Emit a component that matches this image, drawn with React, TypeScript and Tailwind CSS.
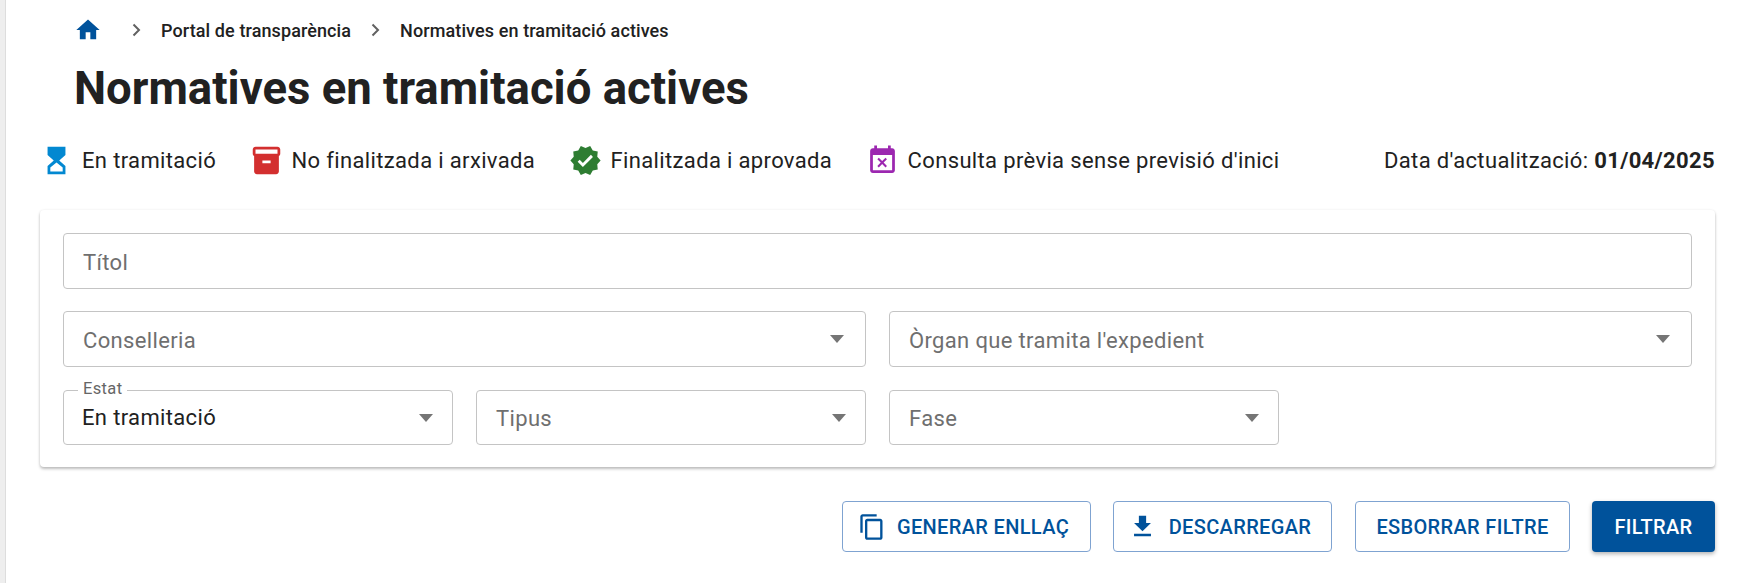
const ICONS = {
  home: "M10 20v-6h4v6h5v-8h3L12 3 2 12h3v8z",
  hourglass: "M5.5 2H18.5V8L14 12L18.5 16V22H5.5V16L10 12L5.5 8ZM16.5 20V17L12 13.5L7.5 17V20Z",
  archive: "M20 2H4c-1 0-2 .9-2 2v3.01c0 .72.43 1.34 1 1.69V20c0 1.1 1.1 2 2 2h14c.9 0 2-.9 2-2V8.7c.57-.35 1-.97 1-1.69V4c0-1.1-1-2-2-2zm-5 12H9v-2h6v2zm5-7H4V4h16v3z",
  verified: "M23 12l-2.44-2.79.34-3.69-3.61-.82-1.89-3.2L12 2.96 8.6 1.5 6.71 4.69 3.1 5.5l.34 3.7L1 12l2.44 2.79-.34 3.7 3.61.82L8.6 22.5l3.4-1.47 3.4 1.46 1.89-3.19 3.61-.82-.34-3.69L23 12zm-12.91 4.72l-3.8-3.81 1.48-1.48 2.32 2.33 5.85-5.87 1.48 1.48-7.33 7.35z",
  event: "M9.31 17l2.44-2.44L14.19 17l1.06-1.06-2.44-2.44 2.44-2.44L14.19 10l-2.44 2.44L9.31 10l-1.06 1.06 2.44 2.44-2.44 2.44L9.31 17zM19 3h-1V1h-2v2H8V1H6v2H5c-1.11 0-1.99.9-1.99 2L3 19c0 1.1.89 2 2 2h14c1.1 0 2-.9 2-2V5c0-1.1-.9-2-2-2zm0 16H5V8h14v11z",
  copy: "M16 1H4c-1.1 0-2 .9-2 2v14h2V3h12V1zm3 4H8c-1.1 0-2 .9-2 2v14c0 1.1.9 2 2 2h11c1.1 0 2-.9 2-2V7c0-1.1-.9-2-2-2zm0 16H8V7h11v14z",
  download: "M19 9h-4V3H9v6H5l7 7 7-7zM5 18v2h14v-2H5z",
};

const LEGEND = [
  { label: "En tramitació", icon: ICONS.hourglass, color: "text-[#0288d1]" },
  { label: "No finalitzada i arxivada", icon: ICONS.archive, color: "text-[#d32f2f]" },
  { label: "Finalitzada i aprovada", icon: ICONS.verified, color: "text-[#2e7d32]" },
  { label: "Consulta prèvia sense previsió d'inici", icon: ICONS.event, color: "text-[#9c27b0]" },
];

function Icon({ d, className }: { d: string; className?: string }) {
  return (
    <svg viewBox="0 0 24 24" fill="currentColor" fillRule="evenodd" className={className}>
      <path d={d} />
    </svg>
  );
}

function Chevron() {
  return (
    <svg viewBox="0 0 24 24" fill="none" stroke="#616161" strokeWidth="2" className="h-[24px] w-[24px]">
      <path d="M9.5 6.5l5.5 5.5-5.5 5.5" />
    </svg>
  );
}

function Select({ label, value, className }: { label: string; value?: string; className: string }) {
  return (
    <div className={`relative flex items-center justify-between rounded-[4px] border border-[#c4c4c4] ${className}`}>
      {value && (
        <span className="absolute left-[14px] top-[-11px] bg-white px-[5px] text-[16.5px] leading-[18px] text-[#666666]">{label}</span>
      )}
      <span className={value ? "text-[#212121]" : "pt-[2px] text-[#6f6f6f]"}>{value ?? label}</span>
      <span className="h-0 w-0 border-x-[7.5px] border-t-[8px] border-x-transparent border-t-[#757575]" />
    </div>
  );
}

export default function App() {
  return (
    <div className="flex h-[583px] w-full overflow-hidden bg-white font-['Roboto',sans-serif] text-[#212121]">
      <div className="w-[6px] shrink-0 border-r border-[#dddddd] bg-[#eeeeee]" />

      <main className="min-w-0 flex-1 pl-[34px] pr-[28px]">
        <nav className="flex h-[60px] items-center pl-[34px] text-[18px] font-medium tracking-[0.1px]">
          <Icon d={ICONS.home} className="h-[28px] w-[28px] text-[#00529b]" />
          <span className="ml-[22px] mr-[13px] flex"><Chevron /></span>
          <span>Portal de transparència</span>
          <span className="ml-[12px] mr-[13px] flex"><Chevron /></span>
          <span>Normatives en tramitació actives</span>
        </nav>

        <h1 className="ml-[34px] mt-[1px] text-[45.5px] font-bold leading-[56px]">Normatives en tramitació actives</h1>

        <div className="mt-[23px] flex h-[40px] items-center justify-between text-[22px] tracking-[0.35px]">
          <div className="flex items-center gap-[33.5px]">
            {LEGEND.map((item) => (
              <div key={item.label} className="flex items-center gap-[9px]">
                <Icon d={item.icon} className={`h-[33px] w-[33px] ${item.color}`} />
                <span>{item.label}</span>
              </div>
            ))}
          </div>
          <p>Data d'actualització: <strong className="font-bold">01/04/2025</strong></p>
        </div>

        <section className="mt-[30px] rounded-[4px] bg-white px-[23px] pb-[22px] pt-[23px] text-[22px] tracking-[0.35px] shadow-[0_2px_3px_rgba(0,0,0,0.25),0_0_3px_rgba(0,0,0,0.06)]">
          <div className="flex h-[56px] items-center rounded-[4px] border border-[#c4c4c4] pl-[19px] pt-[2px] text-[#6f6f6f]">Títol</div>

          <div className="mt-[22px] grid grid-cols-2 gap-[23px]">
            <Select label="Conselleria" className="h-[56px] pl-[19px] pr-[21px]" />
            <Select label="Òrgan que tramita l'expedient" className="h-[56px] pl-[19px] pr-[21px]" />
          </div>

          <div className="mt-[23px] grid grid-cols-4 gap-[23px]">
            <Select label="Estat" value="En tramitació" className="h-[55px] pl-[18px] pr-[19px]" />
            <Select label="Tipus" className="h-[55px] pl-[19px] pr-[19px]" />
            <Select label="Fase" className="h-[55px] pl-[19px] pr-[19px]" />
          </div>
        </section>

        <div className="mt-[34px] flex justify-end gap-[22px] text-[20px] font-medium tracking-[0.35px]">
          <button className="flex h-[51px] w-[249px] items-center justify-center gap-[11px] rounded-[4px] border border-[#7fa3d1] pr-[6px] text-[#00529b]">
            <Icon d={ICONS.copy} className="h-[28px] w-[28px]" />
            GENERAR ENLLAÇ
          </button>
          <button className="mr-[1px] flex h-[51px] w-[219px] items-center justify-center gap-[12px] rounded-[4px] border border-[#7fa3d1] pr-[6px] text-[#00529b]">
            <Icon d={ICONS.download} className="h-[29px] w-[29px]" />
            DESCARREGAR
          </button>
          <button className="flex h-[51px] w-[215px] items-center justify-center rounded-[4px] border border-[#7fa3d1] text-[#00529b]">ESBORRAR FILTRE</button>
          <button className="flex h-[51px] w-[123px] items-center justify-center rounded-[4px] bg-[#00529b] text-white shadow-[0_2px_4px_rgba(0,0,0,0.3)]">FILTRAR</button>
        </div>
      </main>
    </div>
  );
}
